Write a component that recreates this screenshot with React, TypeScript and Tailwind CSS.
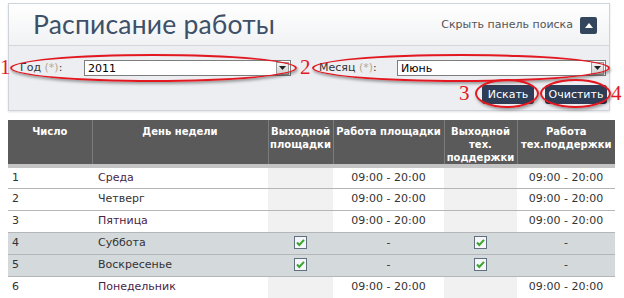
import React from 'react';

type Row = {
  num: number;
  day: string;
  dayColor: string;
  weekend: boolean;
};

const rows: Row[] = [
  { num: 1, day: 'Среда', dayColor: 'text-[#4a2446]', weekend: false },
  { num: 2, day: 'Четверг', dayColor: 'text-[#333]', weekend: false },
  { num: 3, day: 'Пятница', dayColor: 'text-[#4a2446]', weekend: false },
  { num: 4, day: 'Суббота', dayColor: 'text-[#333]', weekend: true },
  { num: 5, day: 'Воскресенье', dayColor: 'text-[#333]', weekend: true },
  { num: 6, day: 'Понедельник', dayColor: 'text-[#4a2446]', weekend: false },
];

function Checkbox() {
  return (
    <svg width="13" height="13" viewBox="0 0 13 13" className="inline-block align-middle">
      <rect x="0.5" y="0.5" width="12" height="12" fill="#f4f6f8" stroke="#5f6f80" />
      <path d="M3 6.5 L5.3 9 L10 3.8" fill="none" stroke="#3aa52b" strokeWidth="2" />
    </svg>
  );
}

function Select({ value, width }: { value: string; width: string }) {
  return (
    <div className={`flex h-[16px] items-center border border-[#7d7d7d] bg-white ${width}`}>
      <span className="flex-1 pl-[3px] text-[11px] leading-none text-black">{value}</span>
      <span className="mr-px flex h-[13px] w-[13px] items-center justify-center border border-[#9a9a9a] bg-gradient-to-b from-[#f4f4f4] to-[#cfcfcf]">
        <svg width="7" height="4" viewBox="0 0 7 4">
          <path d="M0 0 H7 L3.5 4 Z" fill="#222" />
        </svg>
      </span>
    </div>
  );
}

function Ellipse({ className }: { className: string }) {
  return (
    <div
      className={`pointer-events-none absolute rounded-[50%] border-2 border-[#e3171f] shadow-[1px_2px_3px_rgba(0,0,0,0.35)] ${className}`}
    />
  );
}

function Mark({ n, className }: { n: string; className: string }) {
  return (
    <span className={`absolute font-['Liberation_Serif'] text-[21px] leading-none text-[#e3171f] ${className}`}>
      {n}
    </span>
  );
}

const th = 'border-b-4 border-b-[#c4c4c4] px-0 pt-[5px] align-top';

export default function App() {
  return (
    <div className="relative h-[298px] w-[624px] overflow-hidden bg-white font-['DejaVu_Sans',sans-serif] text-[11px]">
      <div className="pl-[8px] pt-[3px]">
        <div className="w-[602px] border border-[#cfd4da] bg-[#eceef1] shadow-[0_1px_2px_rgba(0,0,0,0.12)]">
          <div className="flex h-[42px] items-center justify-between border-b border-[#d2d6db] bg-gradient-to-b from-white to-[#f1f2f4] pl-[24px] pr-[12px]">
            <h1 className="font-['Lato',sans-serif] text-[26.5px] leading-none tracking-[0.2px] text-[#3d5068]">
              Расписание работы
            </h1>
            <div className="flex items-center gap-[7px] pt-[2px]">
              <span className="text-[11px] text-[#555]">Скрыть панель поиска</span>
              <span className="flex h-[17px] w-[17px] items-center justify-center rounded-[2px] bg-[#34455e]">
                <svg width="8" height="5" viewBox="0 0 8 5">
                  <path d="M0 5 L4 0 L8 5 Z" fill="#fff" />
                </svg>
              </span>
            </div>
          </div>
          <div className="h-[64px] pt-[14px]">
            <div className="flex items-center">
              <div className="flex w-[300px] items-center">
                <span className="w-[75px] pl-[11px] text-[#333]">
                  Год <span className="text-[#b9a88e]">(*)</span>:
                </span>
                <Select value="2011" width="w-[207px]" />
              </div>
              <div className="flex items-center">
                <span className="w-[88px] pl-[10px] text-[#333]">
                  Месяц <span className="text-[#b9a88e]">(*)</span>:
                </span>
                <Select value="Июнь" width="w-[209px]" />
              </div>
            </div>
            <div className="mt-[8px] flex justify-end gap-[11px] pr-[2px]">
              <button className="h-[19px] w-[52px] rounded-[3px] bg-[#2e3d55] text-[11px] leading-none text-white">
                Искать
              </button>
              <button className="h-[19px] w-[62px] rounded-[3px] bg-[#2e3d55] text-[11px] leading-none text-white">
                Очистить
              </button>
            </div>
          </div>
        </div>
      </div>

      <div className="ml-[8px] mt-[9px] w-[607px]">
        <table className="w-[607px] table-fixed border-collapse">
          <colgroup>
            <col className="w-[84px]" />
            <col className="w-[176px]" />
            <col className="w-[65px]" />
            <col className="w-[111px]" />
            <col className="w-[73px]" />
            <col className="w-[98px]" />
          </colgroup>
          <thead>
            <tr className="h-[46px] bg-[#5a5a5a] text-[10px] font-bold leading-[13px] text-white">
              <th className={`${th} border-r border-r-[#7c7c7c]`}>Число</th>
              <th className={`${th} border-r border-r-[#7c7c7c]`}>День недели</th>
              <th className={`${th} border-r border-r-[#7c7c7c]`}>Выходной площадки</th>
              <th className={`${th} border-r border-r-[#7c7c7c] whitespace-nowrap`}>Работа площадки</th>
              <th className={`${th} border-r border-r-[#7c7c7c]`}>Выходной тех. поддержки</th>
              <th className={th}>
                Работа
                <br />
                тех.поддержки
              </th>
            </tr>
          </thead>
          <tbody>
            {rows.map((r) => (
              <tr
                key={r.num}
                className={`h-[22px] border-b border-[#b3b7ba] text-[11px] ${r.weekend ? 'bg-[#d4d9dc]' : 'bg-white'}`}
              >
                <td className="pl-[4px] text-[#333]">{r.num}</td>
                <td className={`pl-[6px] ${r.dayColor}`}>{r.day}</td>
                <td className={`text-center ${r.weekend ? '' : 'bg-[#f1f1f1]'}`}>{r.weekend && <Checkbox />}</td>
                <td className="text-center text-[#333]">{r.weekend ? '-' : '09:00 - 20:00'}</td>
                <td className={`text-center ${r.weekend ? '' : 'bg-[#f1f1f1]'}`}>{r.weekend && <Checkbox />}</td>
                <td className="text-center text-[#333]">{r.weekend ? '-' : '09:00 - 20:00'}</td>
              </tr>
            ))}
          </tbody>
        </table>
      </div>

      <Ellipse className="left-[10px] top-[54px] h-[28px] w-[287px]" />
      <Ellipse className="left-[312px] top-[54px] h-[28px] w-[298px]" />
      <Ellipse className="left-[475px] top-[79px] h-[29px] w-[64px]" />
      <Ellipse className="left-[540px] top-[79px] h-[29px] w-[71px]" />
      <Mark n="1" className="left-[0px] top-[57px]" />
      <Mark n="2" className="left-[300px] top-[57px]" />
      <Mark n="3" className="left-[459px] top-[83px]" />
      <Mark n="4" className="left-[611px] top-[83px]" />
    </div>
  );
}
